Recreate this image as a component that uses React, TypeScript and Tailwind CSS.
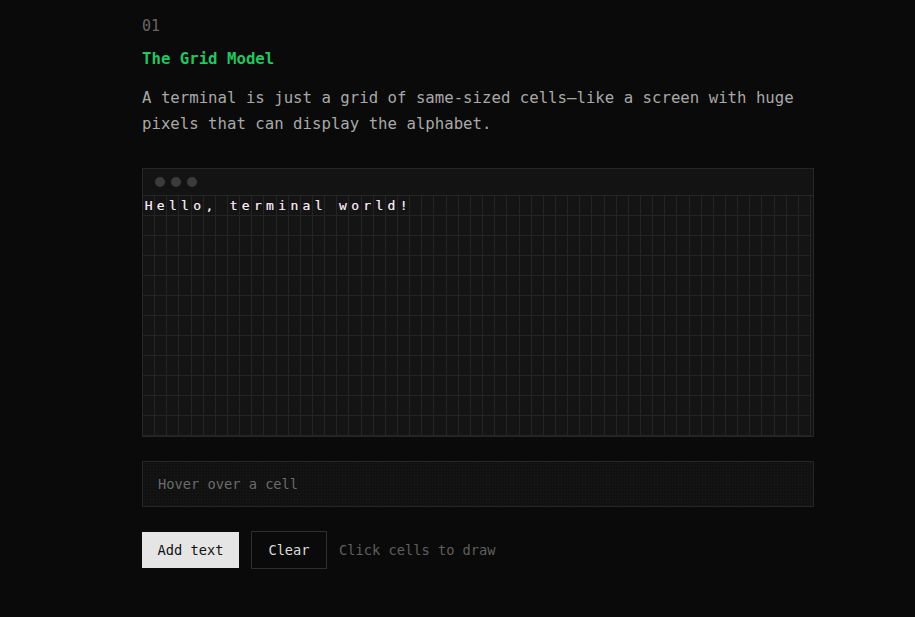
import React from "react";

const COLS = 55;
const ROWS = 12;
const TEXT = "Hello, terminal world!";

export default function App() {
  const cells: React.ReactNode[] = [];
  for (let r = 0; r < ROWS; r++) {
    for (let c = 0; c < COLS; c++) {
      const ch = r === 0 && c < TEXT.length ? TEXT[c] : "";
      cells.push(
        <div
          key={`${r}-${c}`}
          className="h-[20px] border-r border-b border-[#242424] flex items-center justify-center text-[13px] text-[#f2f2f2] leading-none [text-shadow:-0.5px_0_rgba(255,60,60,0.5),0.5px_0_rgba(60,140,255,0.5)]"
        >
          {ch}
        </div>
      );
    }
  }

  return (
    <div
      className="min-h-[617px] w-full bg-[#0a0a0a] pl-[142px] pt-[16px]"
      style={{ fontFamily: '"DejaVu Sans Mono", "Liberation Mono", monospace' }}
    >
      <div className="w-[672px]">
        <div className="text-[15px] leading-[20px] text-[#666666]">01</div>
        <h2 className="mt-[11px] text-[15.7px] leading-[24px] font-bold text-[#22c55e]">
          The Grid Model
        </h2>
        <p className="mt-[14px] text-[15.7px] leading-[26px] text-[#a8a8a8]">
          A terminal is just a grid of same-sized cells—like a screen with huge
          pixels that can display the alphabet.
        </p>

        <div className="mt-[31px] border border-[#262626] bg-[#131313]">
          <div className="h-[27px] border-b border-[#262626] flex items-center gap-[6px] pl-[12px]">
            <span className="w-[10px] h-[10px] rounded-full bg-[#3b3b3b]" />
            <span className="w-[10px] h-[10px] rounded-full bg-[#3b3b3b]" />
            <span className="w-[10px] h-[10px] rounded-full bg-[#3b3b3b]" />
          </div>
          <div className="pr-[2px]">
            <div className="grid grid-cols-[repeat(55,minmax(0,1fr))] bg-[#141414]">
              {cells}
            </div>
          </div>
        </div>

        <div className="mt-[24px] h-[46px] border border-[#262626] bg-[#111111] bg-[radial-gradient(#1b1b1b_0.8px,transparent_0.8px)] bg-[length:3px_3px] flex items-center pl-[15px] text-[13.7px] text-[#6b6b6b]">
          Hover over a cell
        </div>

        <div className="mt-[24px] flex items-center gap-3">
          <button className="h-[36px] w-[97px] bg-[#e5e5e5] text-[#111] text-[13.7px]">
            Add text
          </button>
          <button className="h-[38px] w-[76px] border border-[#2e2e2e] text-[#dcdcdc] text-[13.7px]">
            Clear
          </button>
          <span className="text-[13.7px] text-[#5f5f5f]">Click cells to draw</span>
        </div>
      </div>
    </div>
  );
}
